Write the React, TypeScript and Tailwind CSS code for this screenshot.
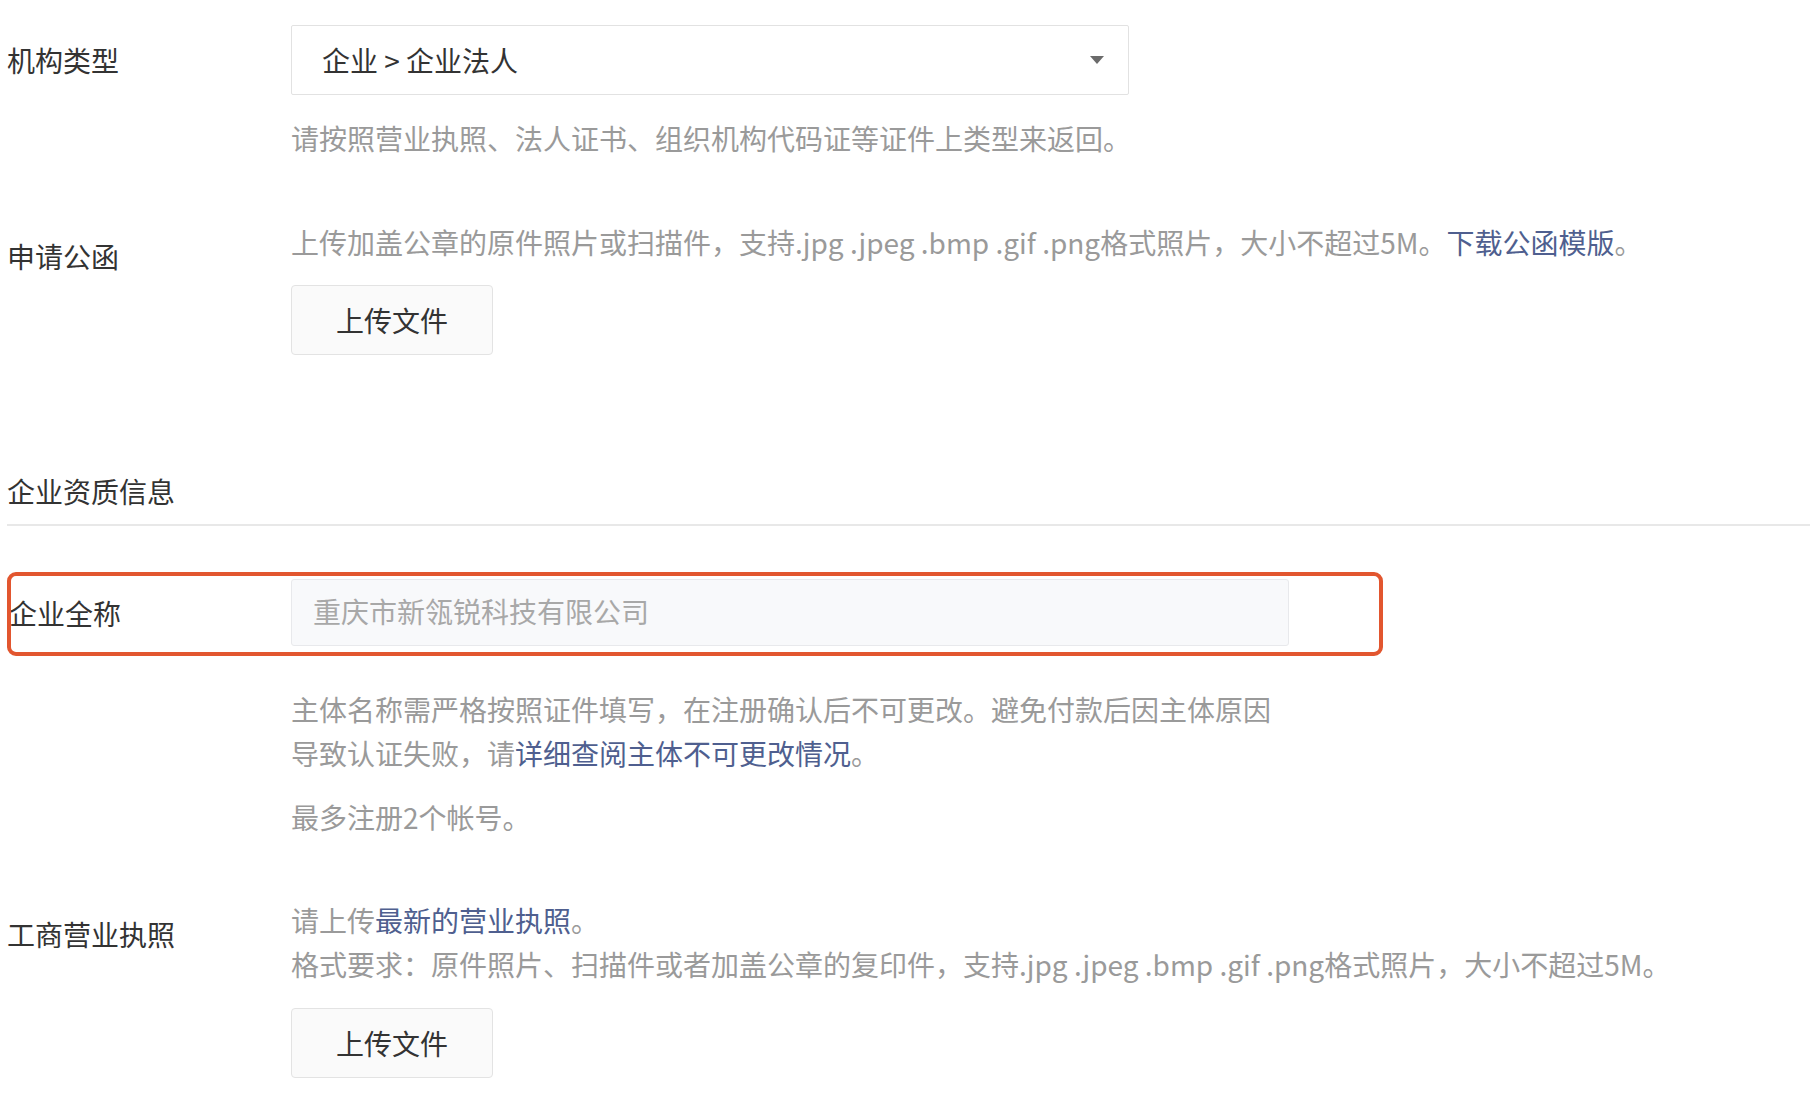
const font = {
  fontFamily: '"Noto Sans CJK SC", "Noto Sans", sans-serif',
};

function UploadButton() {
  return (
    <button className="w-[202px] h-[70px] rounded-[4px] border border-[#e3e3e3] bg-[#fafafa] text-[28px] text-[#333]">
      上传文件
    </button>
  );
}

function Link({ children }: { children: React.ReactNode }) {
  return <span className="text-[#4f5f8f]">{children}</span>;
}

export default function App() {
  return (
    <div className="w-[1810px] h-[1098px] overflow-hidden bg-white pl-[7px] text-[28px] text-[#333]" style={font}>
      {/* 机构类型 */}
      <div className="flex pt-[25px]">
        <div className="w-[284px] shrink-0 h-[70px] flex items-center">机构类型</div>
        <div>
          <div className="w-[838px] h-[70px] border border-[#e2e2e2] rounded-[2px] flex items-center justify-between pl-[30px] pr-[24px]">
            <span className="text-[#333]">企业 &gt; 企业法人</span>
            <svg width="14" height="8" viewBox="0 0 14 8">
              <path d="M0 0 L14 0 L7 8 Z" fill="#6b6b6b" />
            </svg>
          </div>
          <div className="mt-[21px] leading-[44px] text-[#9a9a9a]">
            请按照营业执照、法人证书、组织机构代码证等证件上类型来返回。
          </div>
        </div>
      </div>

      {/* 申请公函 */}
      <div className="flex mt-[60px]">
        <div className="w-[284px] shrink-0 pt-[14px] leading-[44px]">申请公函</div>
        <div>
          <div className="leading-[44px] text-[#9a9a9a]">
            上传加盖公章的原件照片或扫描件，支持.jpg .jpeg .bmp .gif .png格式照片，大小不超过5M。<Link>下载公函模版</Link>。
          </div>
          <div className="mt-[21px]">
            <UploadButton />
          </div>
        </div>
      </div>

      {/* section */}
      <div className="mt-[114px] leading-[44px] pb-[11px] border-b-2 border-[#e8e8e8]">企业资质信息</div>

      {/* 企业全称 */}
      <div className="relative flex mt-[53px]">
        <div className="w-[284px] shrink-0 h-[67px] flex items-center pl-[2px]">企业全称</div>
        <div className="w-[998px] h-[67px] bg-[#f8f9fb] border border-[#e8e9ec] rounded-[3px] flex items-center pl-[21px] pb-[3px] text-[#a8a8a8]">
          重庆市新瓴锐科技有限公司
        </div>
        <div className="absolute left-[0px] top-[-7px] w-[1376px] h-[84px] border-[4px] border-[#e2562f] rounded-[9px] pointer-events-none" />
      </div>

      <div className="ml-[284px] mt-[41px] leading-[44px] text-[#9a9a9a]">
        <div>
          主体名称需严格按照证件填写，在注册确认后不可更改。避免付款后因主体原因
          <br />
          导致认证失败，请<Link>详细查阅主体不可更改情况</Link>。
        </div>
        <div className="mt-[20px]">最多注册2个帐号。</div>
      </div>

      {/* 工商营业执照 */}
      <div className="flex mt-[59px]">
        <div className="w-[284px] shrink-0 pt-[14px] leading-[44px]">工商营业执照</div>
        <div>
          <div className="leading-[44px] text-[#9a9a9a]">
            请上传<Link>最新的营业执照</Link>。
            <br />
            格式要求：原件照片、扫描件或者加盖公章的复印件，支持.jpg .jpeg .bmp .gif .png格式照片，大小不超过5M。
          </div>
          <div className="mt-[22px]">
            <UploadButton />
          </div>
        </div>
      </div>
    </div>
  );
}
